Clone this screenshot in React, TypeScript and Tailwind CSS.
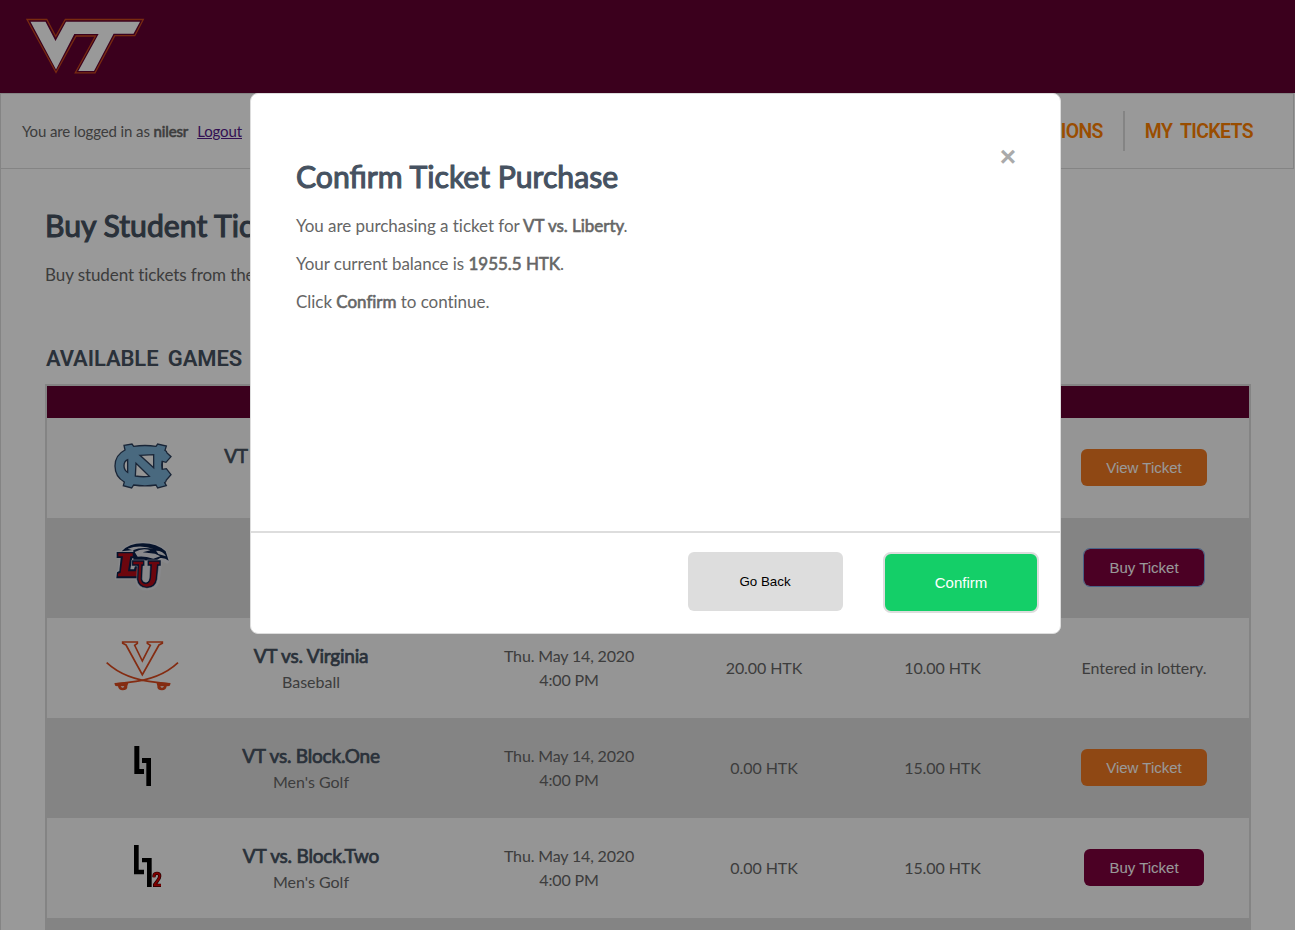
import React from "react";

const strong = "font-normal [-webkit-text-stroke:0.6px_currentColor]";

function VTLogo() {
  return (
    <svg className="block h-[60px] w-[124px]" viewBox="24 16 124 60">
      <path
        d="M27 19.5H46.8L55.7 36.5L65.3 19.5H143.3L134.8 35.7H114.8L95 72.8H75.3L95.5 36H76L56 72.5Z"
        fill="#630031"
        stroke="#c9481c"
        strokeWidth="1.3"
      />
      <path d="M30.5 21.8H45.5L55.5 41L66 21.8H140L133.5 33.8H113.6L94 71H78.3L98.6 34H74.3L56 69.5Z" fill="#fff" />
    </svg>
  );
}

function NCLogo() {
  return (
    <svg className="block size-20" viewBox="39 -6 240 240">
      <path
        d="M102 46L126 42L131 49Q165 44 198 49L203 42L229 48L225 61Q230 63 231 69L243 80L228 97L217 94V118L229 116L243 134L229 150Q228 156 224 158L229 167L203 174L198 165Q165 170 131 165L125 174L100 167L103 156Q75 140 75 108Q75 75 105 60Z"
        fill="#7bafd4"
        stroke="#2b3f5c"
        strokeWidth="4"
      />
      <path d="M113 89V127Q102 120 102 107Q102 94 113 89Z M150 76L191 74V113Z M138 100L178 139Q158 142 136 138Z" fill="#f8f8f8" stroke="#2b3f5c" strokeWidth="4" />
      <path d="M217 94Q213 106 217 118" fill="none" stroke="#2b3f5c" strokeWidth="4" />
    </svg>
  );
}

function LibertyLogo() {
  return (
    <svg className="block size-20" viewBox="9 -6 240 240">
      <path d="M60 64Q85 35 130 36Q172 36 200 62L210 92L203 101L184 94V112L180 145Q178 178 146 181H128Q110 176 106 149H45L47 126L54 120L57 86L46 79V63Z" fill="#e4e5ea" />
      <path d="M65 64Q88 39 130 40Q170 40 197 64L206 92Q195 82 180 84L168 92L100 90V60Z" fill="#0b2149" />
      <path d="M83 56Q120 42 162 57Q125 49 98 61ZM104 66Q128 52 151 61L128 67L165 71L181 79L160 86Q132 77 113 80ZM168 62Q190 62 198 79L175 72Z" fill="#e4e5ea" />
      <path d="M50 66H104V84H97L91 118H102L105 108H122L120 145H49L51 127L58 123L62 84H50Z" fill="#0b2149" />
      <path d="M55 70H98V79H91L84 124H107L110 114H116L114 139H54V131L62 128L69 79H55Z" fill="#b40a18" />
      <path d="M95 90H134V108H129L127 147Q129 157 138 157Q147 155 148 143L150 108H142V90H183V108H176L172 148Q168 174 141 175Q113 173 110 148L112 108H95Z" fill="#0b2149" stroke="#e4e5ea" strokeWidth="1.5" />
      <path d="M100 95H129V103H124L122 147Q124 162 138 162Q151 161 153 144L156 103H147V95H178V103H171L167 147Q164 169 140 170Q117 168 115 147L117 103H100Z" fill="#b40a18" />
    </svg>
  );
}

function VirginiaLogo() {
  return (
    <svg className="block size-20" viewBox="39 -6 240 240">
      <g fill="none" stroke="#dd4a1e" strokeWidth="5">
        <path d="M98 36H142V40L134 46L157 93L181 46L172 40V36H217V40L207 45L157 134L108 45L98 40Z" strokeWidth="5" />
        <path d="M50 98Q105 149 200 157L241 162" />
        <path d="M264 98Q210 149 115 157L74 162" />
      </g>
      <path d="M74 159L116 156L112 168Q113 181 98 181Q86 181 84 169L76 168ZM241 159L199 156L202 168Q201 181 216 181Q228 181 230 169L239 168Z" fill="#dd4a1e" />
      <path d="M92 169H103Q102 173 98 173Q94 173 92 169ZM211 169H222Q220 173 216 173Q212 173 211 169Z" fill="#f8f8f8" />
    </svg>
  );
}

function BlockOneLogo() {
  return (
    <svg className="block size-20" viewBox="-51 -21 240 240">
      <path d="M43 33H58V102H72V117H43ZM66 69H93V153H79V84H66Z" fill="#000" />
    </svg>
  );
}

function BlockTwoLogo() {
  return (
    <svg className="block size-20" viewBox="-51 -21 240 240">
      <path d="M42 30H56V104H72V118H42ZM66 69H95V156H81V82H66Z" fill="#000" />
      <path d="M102 127V122Q103 115 111 115Q120 115 119 124Q119 130 112 138L104 149V151H123" fill="none" stroke="#300" strokeWidth="10" />
      <path d="M102 127V122Q103 115 111 115Q120 115 119 124Q119 130 112 138L104 149V151H123" fill="none" stroke="#d40000" strokeWidth="6" />
    </svg>
  );
}

type Game = {
  logo: React.ReactNode;
  name: string;
  sport: string;
  price: string;
  fee: string;
  action: "view" | "buy" | "lottery";
  focused?: boolean;
};

const games: Game[] = [
  { logo: <NCLogo />, name: "VT vs. North Carolina", sport: "Football", price: "30.00 HTK", fee: "10.00 HTK", action: "view" },
  { logo: <LibertyLogo />, name: "VT vs. Liberty", sport: "Football", price: "20.00 HTK", fee: "10.00 HTK", action: "buy", focused: true },
  { logo: <VirginiaLogo />, name: "VT vs. Virginia", sport: "Baseball", price: "20.00 HTK", fee: "10.00 HTK", action: "lottery" },
  { logo: <BlockOneLogo />, name: "VT vs. Block.One", sport: "Men's Golf", price: "0.00 HTK", fee: "15.00 HTK", action: "view" },
  { logo: <BlockTwoLogo />, name: "VT vs. Block.Two", sport: "Men's Golf", price: "0.00 HTK", fee: "15.00 HTK", action: "buy" },
];

function Action({ game }: { game: Game }) {
  if (game.action === "lottery") return <span>Entered in lottery.</span>;
  const base = "mb-0.5 h-[37px] rounded-md pt-px font-['Liberation_Sans',sans-serif] text-[15px] text-white";
  if (game.action === "view") return <button className={`${base} w-[126px] bg-[#ee7822]`}>View Ticket</button>;
  return (
    <button className={`${base} w-[120px] bg-[#7d003d] ${game.focused ? "outline-1 outline-[#7ba4e0]" : ""}`}>
      Buy Ticket
    </button>
  );
}

function GameRow({ game }: { game: Game }) {
  return (
    <div className="grid h-[100px] grid-cols-[160px_226px_240px_149px_208px_196px] items-center justify-items-center pl-4 text-center text-[16px] leading-6 text-[#666] odd:bg-[#f8f8f8] even:bg-[#ddd]">
      {game.logo}
      <div className="w-[226px] pt-0.5 pr-[50px] whitespace-nowrap">
        <div className="text-[19px] leading-[26px] tracking-[-0.2px] text-[#465261] [-webkit-text-stroke:0.7px_currentColor]">{game.name}</div>
        <div className="leading-[26px]">{game.sport}</div>
      </div>
      <div className="tracking-[-0.16px]">
        Thu. May 14, 2020
        <br />
        4:00 PM
      </div>
      <div className="pl-px tracking-[-0.08px]">{game.price}</div>
      <div className="pl-px tracking-[-0.08px]">{game.fee}</div>
      <Action game={game} />
    </div>
  );
}

function Modal() {
  return (
    <div className="absolute top-[93px] left-[250px] flex h-[541px] w-[811px] flex-col rounded-lg border border-[#ddd] bg-white">
      <div className="relative h-[437px] px-[45px] pt-[60px] text-[17px] tracking-[-0.04px] text-[#666]">
        <button className="absolute top-[50px] right-[44px] font-['Liberation_Sans',sans-serif] text-[28px] leading-[26px] font-bold text-[#aaa]">×</button>
        <h2 className="text-[30.2px] leading-[44px] tracking-normal text-[#465261] [-webkit-text-stroke:1.1px_currentColor]">Confirm Ticket Purchase</h2>
        <p className="mt-[15px] leading-[26px]">
          You are purchasing a ticket for <b className={strong}>VT vs. Liberty</b>.
        </p>
        <p className="mt-3 leading-[26px]">
          Your current balance is <b className={strong}>1955.5 HTK</b>.
        </p>
        <p className="mt-3 leading-[26px]">
          Click <b className={strong}>Confirm</b> to continue.
        </p>
      </div>
      <div className="flex flex-1 items-start justify-end gap-10 border-t-2 border-[#ddd] pt-[19px] pr-[21px] font-['Liberation_Sans',sans-serif]">
        <button className="h-[59px] w-[155px] rounded-md bg-[#ddd] pr-px text-[13.333px] text-black">Go Back</button>
        <button className="h-[61px] w-[156px] rounded-lg border-2 border-[#ddd] bg-[#14cf68] pt-px text-[15px] text-white">Confirm</button>
      </div>
    </div>
  );
}

export default function App() {
  return (
    <div className="relative h-[930px] w-full overflow-hidden bg-white font-['Lato',sans-serif] text-[#666]">
      <header className="h-[93px] bg-[#630031] pt-4 pl-6">
        <VTLogo />
      </header>
      <div className="border-l border-[#ddd]">
        <nav className="mr-px flex h-[76px] items-center justify-between border border-l-0 border-[#ddd] pr-10 pl-[21px]">
          <div className="text-[15px] tracking-[-0.12px]">
            You are logged in as <b className={strong}>nilesr</b>
            <a className="ml-[9px] text-[#551a8b] underline">Logout</a>
          </div>
          <div className="flex items-center font-['Roboto',sans-serif] text-[19.4px] font-semibold tracking-[-0.6px] text-[#ff8000] [word-spacing:4px]">
            <a className="pt-px">AUCTIONS</a>
            <span className="mx-5 h-10 w-0.5 bg-[#ddd]" />
            <a className="pt-px">MY TICKETS</a>
          </div>
        </nav>
        <main className="px-11 pt-[35px]">
          <h2 className="-mt-px text-[30.2px] leading-[44px] text-[#465261] [-webkit-text-stroke:1.1px_currentColor]">Buy Student Tickets</h2>
          <p className="mt-[15px] text-[17px] leading-[26px] tracking-[-0.08px]">Buy student tickets from the games below.</p>
          <h3 className="mt-[55px] pl-px font-['Roboto',sans-serif] text-[22px] leading-8 font-semibold tracking-[-0.1px] text-[#465261] [word-spacing:4px]">AVAILABLE GAMES</h3>
          <div className="mt-[9px] border-2 border-[#ddd]">
            <div className="h-8 bg-[#630031]" />
            <div>
              {games.map((g) => (
                <GameRow key={g.name} game={g} />
              ))}
              <div className="h-[100px] bg-[#ddd]" />
            </div>
          </div>
        </main>
      </div>
      <div className="absolute inset-0 bg-black/40" />
      <Modal />
    </div>
  );
}
